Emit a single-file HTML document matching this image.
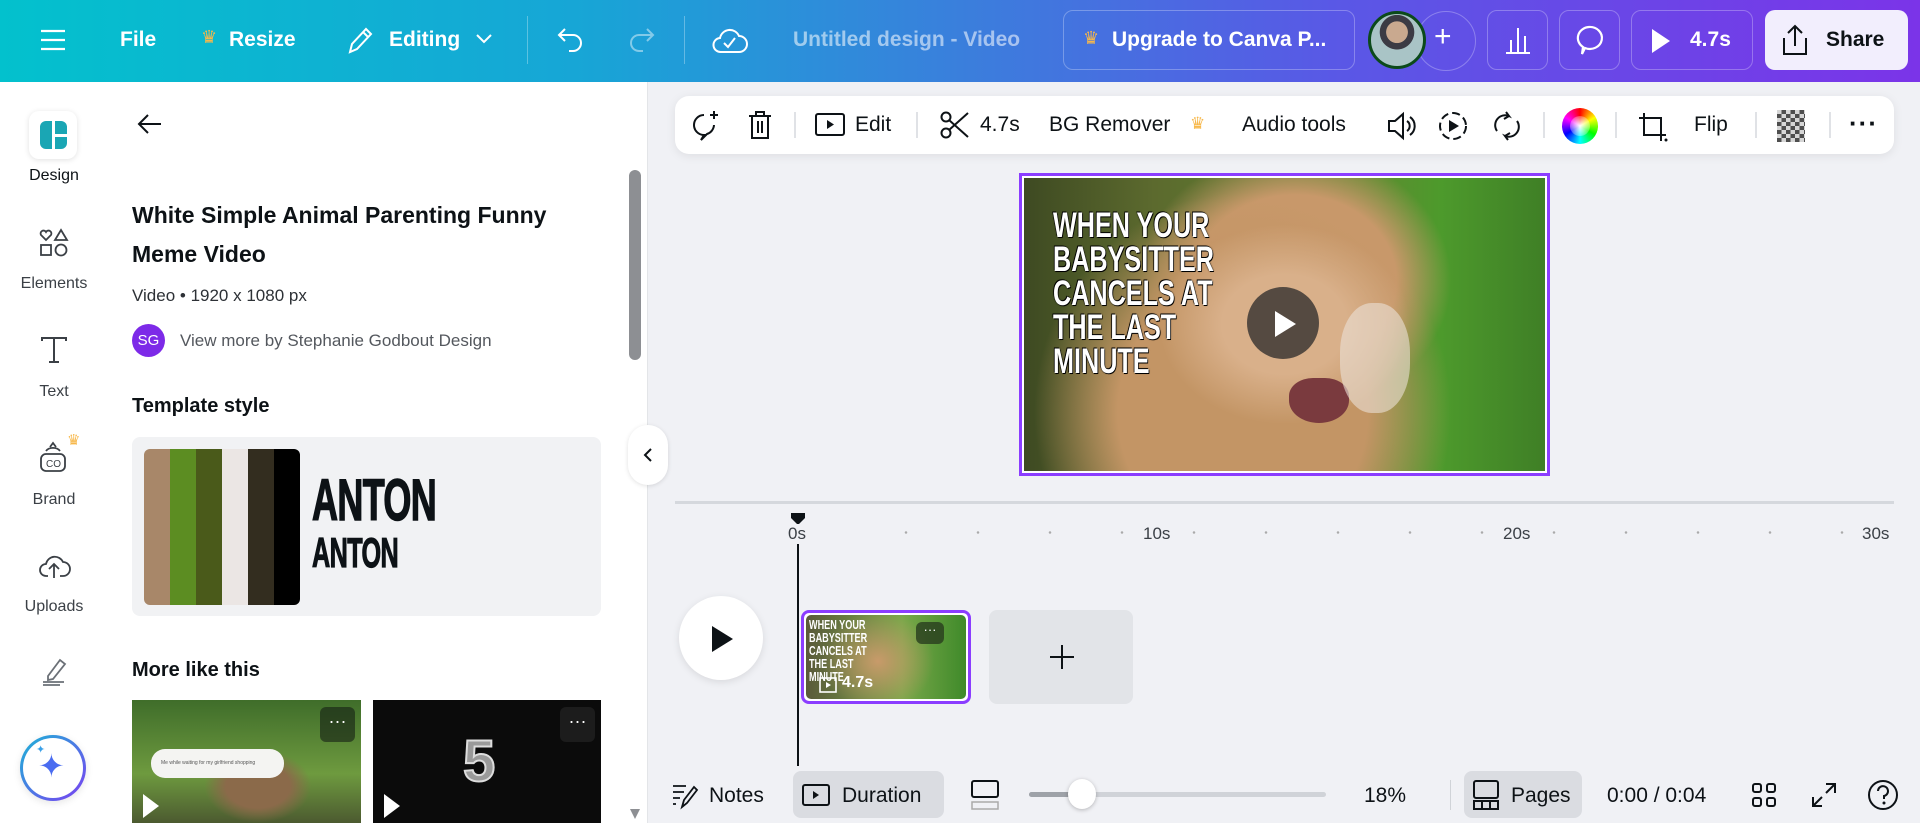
<!DOCTYPE html>
<html><head><meta charset="utf-8"><style>
*{box-sizing:border-box;margin:0;padding:0}
body{width:1920px;height:823px;overflow:hidden;background:#f0f1f5;font-family:"Liberation Sans",sans-serif;color:#0d1216;position:relative}
.a{position:absolute}
.top{left:0;top:0;width:1920px;height:82px;background:linear-gradient(90deg,#03c1cd 0%,#17a6d6 30%,#3a7fdc 50%,#5a57e6 70%,#7b34e8 100%)}
.tw{color:#fff;font-weight:bold;font-size:21px;top:28px}
.tbtn{border:1px solid rgba(255,255,255,.28);border-radius:10px;top:10px;height:60px}
.rail{left:0;top:82px;width:108px;height:741px;background:#fff}
.rl{width:108px;text-align:center;font-size:16px;color:#3b4046}
.panel{left:108px;top:82px;width:540px;height:741px;background:#fff;border-right:1px solid #e3e5e8}
.tb{left:675px;top:96px;width:1219px;height:58px;background:#fff;border-radius:14px;box-shadow:0 2px 10px rgba(0,0,0,.08)}
.tt{font-size:21px;top:16px;color:#0d1216}
.sep{width:2px;height:26px;top:16px;background:#e0e2e6}
svg{position:absolute;overflow:visible}
.cond{font-family:"Liberation Sans Narrow","Liberation Sans",sans-serif;font-weight:bold;transform-origin:left top}
</style></head><body>
<div class="a top"></div>
<svg style="left:41px;top:29px" width="24" height="22"><g stroke="#fff" stroke-width="2.2"><line x1="0" y1="2" x2="24" y2="2"/><line x1="0" y1="11" x2="24" y2="11"/><line x1="0" y1="20" x2="24" y2="20"/></g></svg>
<div class="a tw" style="left:120px">File</div>
<div class="a" style="left:201px;top:27px;color:#f7b84b;font-size:18px">♛</div>
<div class="a tw" style="left:229px">Resize</div>
<svg style="left:346px;top:26px" width="28" height="30"><path d="M4 26 L6 18 L20 3 L25 8 L11 23 Z M17 6 L22 11" fill="none" stroke="#fff" stroke-width="2"/></svg>
<div class="a tw" style="left:389px">Editing</div>
<svg style="left:476px;top:34px" width="16" height="10"><path d="M1 1 L8 8 L15 1" fill="none" stroke="#fff" stroke-width="2"/></svg>
<div class="a" style="left:527px;top:16px;width:1px;height:48px;background:rgba(255,255,255,.3)"></div>
<svg style="left:557px;top:27px" width="28" height="26"><path d="M8 2 L2 8 L8 14 M2 8 H16 a8 8 0 0 1 0 16 H12" fill="none" stroke="#fff" stroke-width="2"/></svg>
<svg style="left:627px;top:27px" width="28" height="26"><path d="M20 2 L26 8 L20 14 M26 8 H12 a8 8 0 0 0 0 16 H16" fill="none" stroke="rgba(255,255,255,.45)" stroke-width="2"/></svg>
<div class="a" style="left:684px;top:16px;width:1px;height:48px;background:rgba(255,255,255,.3)"></div>
<svg style="left:713px;top:26px" width="32" height="28"><path d="M8 26 a7 7 0 0 1 -1 -14 a10 10 0 0 1 19 -2 a8 8 0 0 1 0 16 Z" fill="none" stroke="#fff" stroke-width="2"/><path d="M11 17 L15 21 L22 12" fill="none" stroke="#fff" stroke-width="2"/></svg>
<div class="a tw" style="left:793px;color:rgba(255,255,255,.55)">Untitled design - Video</div>
<div class="a tbtn" style="left:1063px;width:292px"></div>
<div class="a" style="left:1083px;top:28px;color:#f7b84b;font-size:18px">♛</div>
<div class="a tw" style="left:1112px">Upgrade to Canva P...</div>
<div class="a" style="left:1416px;top:11px;width:60px;height:60px;border-radius:50%;border:1px solid rgba(255,255,255,.28)"></div>
<div class="a" style="left:1368px;top:11px;width:58px;height:58px;border-radius:50%;border:3px solid #0b4a1a;background:radial-gradient(circle at 50% 35%,#c9a98f 0 25%,#3b3b44 26% 40%,#a9c4c6 41%)"></div>
<div class="a" style="left:1434px;top:22px;color:#fff;font-size:30px;line-height:30px">+</div>
<div class="a tbtn" style="left:1487px;width:61px"></div>
<svg style="left:1504px;top:26px" width="28" height="28"><g stroke="#fff" stroke-width="2"><line x1="2" y1="27" x2="26" y2="27"/><line x1="7" y1="27" x2="7" y2="14"/><line x1="14" y1="27" x2="14" y2="2"/><line x1="21" y1="27" x2="21" y2="10"/></g></svg>
<div class="a tbtn" style="left:1559px;width:61px"></div>
<svg style="left:1574px;top:25px" width="30" height="32"><path d="M15 2 a12 11 0 1 1 -4 21 L8 29 L9 22 a12 11 0 0 1 6 -20 Z" fill="none" stroke="#fff" stroke-width="2.2"/></svg>
<div class="a tbtn" style="left:1631px;width:122px"></div>
<svg style="left:1650px;top:27px" width="22" height="28"><path d="M2 2 L20 14 L2 26 Z" fill="#fff"/></svg>
<div class="a tw" style="left:1690px">4.7s</div>
<div class="a" style="left:1765px;top:10px;width:143px;height:60px;border-radius:10px;background:#f2eefd"></div>
<svg style="left:1781px;top:24px" width="28" height="32"><path d="M14 22 V2 M7 9 L14 2 L21 9 M3 14 V30 H25 V14" fill="none" stroke="#0d1216" stroke-width="2"/></svg>
<div class="a" style="left:1826px;top:28px;font-size:21px;font-weight:bold;color:#0d1216">Share</div>

<div class="a rail"></div>
<div class="a" style="left:29px;top:111px;width:48px;height:48px;border-radius:10px;background:#fff;box-shadow:0 1px 6px rgba(0,0,0,.12)"></div>
<div class="a" style="left:40px;top:121px;width:27px;height:28px;border-radius:6px;background:#1aa6b4"></div>
<div class="a" style="left:52px;top:121px;width:3px;height:28px;background:#fff"></div>
<div class="a" style="left:55px;top:134px;width:12px;height:3px;background:#fff"></div>
<div class="a rl" style="top:167px;color:#0d1216">Design</div>
<svg style="left:40px;top:229px" width="28" height="28"><g fill="none" stroke="#3b4046" stroke-width="1.8"><path d="M6 11 L1 6 a2.8 2.8 0 0 1 5 -3 a2.8 2.8 0 0 1 5 3 Z"/><path d="M21 1 L27 11 H15 Z"/><rect x="1" y="16" width="10" height="10"/><circle cx="21" cy="21" r="5.5"/></g></svg>
<div class="a rl" style="top:275px">Elements</div>
<svg style="left:41px;top:337px" width="26" height="26"><path d="M1 4 V1 H25 V4 M13 1 V25 M8 25 H18" fill="none" stroke="#3b4046" stroke-width="2"/></svg>
<div class="a rl" style="top:383px">Text</div>
<svg style="left:40px;top:441px" width="28" height="32"><g fill="none" stroke="#3b4046" stroke-width="1.8"><rect x="1" y="13" width="24" height="17" rx="5"/><path d="M6 10 a8 6 0 0 1 14 0 M10 6 L13 2 L16 6"/><text x="6" y="26" font-size="10" fill="#3b4046" stroke="none" font-family="Liberation Sans">CO</text></g></svg>
<div class="a" style="left:67px;top:431px;color:#f7b84b;font-size:15px">♛</div>
<div class="a rl" style="top:491px">Brand</div>
<svg style="left:39px;top:550px" width="30" height="30"><path d="M9 26 H7 a6 6 0 0 1 0 -12 a9 9 0 0 1 17 -2 a7 7 0 0 1 0 14 H21 M15 28 V14 M10 19 L15 14 L20 19" fill="none" stroke="#3b4046" stroke-width="1.8"/></svg>
<div class="a rl" style="top:598px">Uploads</div>
<svg style="left:40px;top:658px" width="28" height="28"><path d="M8 18 L20 2 L25 6 L13 21 L8 22 Z M3 24 H24 M3 27 H20" fill="none" stroke="#6b7077" stroke-width="1.8"/></svg>
<div class="a" style="left:20px;top:735px;width:66px;height:66px;border-radius:50%;background:linear-gradient(#fff,#fff) padding-box,linear-gradient(135deg,#1bb4d6,#7b3ff2) border-box;border:3px solid transparent;box-shadow:0 2px 8px rgba(0,0,0,.1)"></div>
<div class="a" style="left:38px;top:748px;font-size:32px;color:#4a6cf0;line-height:36px">✦</div>
<div class="a" style="left:36px;top:743px;font-size:11px;color:#3aa0e8">✦</div>

<div class="a panel"></div>
<svg style="left:138px;top:114px" width="24" height="20"><path d="M10 1 L1 10 L10 19 M1 10 H23" fill="none" stroke="#0d1216" stroke-width="2"/></svg>
<div class="a" style="left:132px;top:196px;font-size:23px;font-weight:bold;line-height:39px;width:470px;color:#0d1216">White Simple Animal Parenting Funny Meme Video</div>
<div class="a" style="left:132px;top:286px;font-size:17px;color:#2d3136">Video • 1920 x 1080 px</div>
<div class="a" style="left:132px;top:324px;width:33px;height:33px;border-radius:50%;background:#7d2ae8;color:#fff;font-size:15px;text-align:center;line-height:33px">SG</div>
<div class="a" style="left:180px;top:331px;font-size:17px;color:#54585e">View more by Stephanie Godbout Design</div>
<div class="a" style="left:132px;top:395px;font-size:20px;font-weight:bold">Template style</div>
<div class="a" style="left:132px;top:437px;width:469px;height:179px;border-radius:8px;background:#f1f2f4"></div>
<div class="a" style="left:144px;top:449px;width:156px;height:156px;border-radius:6px;overflow:hidden;display:flex">
<div style="flex:1;background:#a88769"></div><div style="flex:1;background:#5c8d22"></div><div style="flex:1;background:#4a5a1a"></div><div style="flex:1;background:#ebe6e4"></div><div style="flex:1;background:#332d1f"></div><div style="flex:1;background:#000"></div></div>
<div class="a cond" style="left:312px;top:472px;font-size:58px;line-height:58px;transform:scaleX(.62);-webkit-text-stroke:1.5px #0d1216;letter-spacing:-1px">ANTON</div>
<div class="a cond" style="left:312px;top:532px;font-size:42px;line-height:42px;transform:scaleX(.6);-webkit-text-stroke:1.2px #0d1216;letter-spacing:-1px">ANTON</div>
<div class="a" style="left:132px;top:659px;font-size:20px;font-weight:bold">More like this</div>
<div class="a" style="left:132px;top:700px;width:229px;height:123px;background:radial-gradient(ellipse at 55% 70%,#8b6a4a 0 18%,transparent 30%),linear-gradient(#3f6d2a,#6e9a3f 60%,#4c5a30)"></div>
<div class="a" style="left:151px;top:749px;width:133px;height:29px;border-radius:14px;background:#f4f4f2;font-size:5px;color:#555;padding:11px 10px">Me while waiting for my girlfriend shopping</div>
<div class="a" style="left:320px;top:707px;width:35px;height:35px;border-radius:6px;background:rgba(20,30,20,.6);color:#fff;text-align:center;font-size:18px;line-height:28px">···</div>
<svg style="left:143px;top:794px" width="18" height="24"><path d="M0 0 L16 12 L0 24Z" fill="#fff"/></svg>
<div class="a" style="left:373px;top:700px;width:228px;height:123px;background:#0b0b0b"></div>
<div class="a" style="left:463px;top:728px;font-size:58px;font-weight:bold;color:#9a9a9a;-webkit-text-stroke:2px #ddd">5</div>
<div class="a" style="left:560px;top:707px;width:35px;height:35px;border-radius:6px;background:#1c1c1c;color:#fff;text-align:center;font-size:18px;line-height:28px">···</div>
<svg style="left:384px;top:794px" width="18" height="24"><path d="M0 0 L16 12 L0 24Z" fill="#fff"/></svg>
<div class="a" style="left:629px;top:170px;width:12px;height:190px;border-radius:6px;background:#8d8f93"></div>
<svg style="left:629px;top:808px" width="12" height="12"><path d="M1 1 L6 11 L11 1Z" fill="#8d8f93"/></svg>

<div class="a" style="left:628px;top:425px;width:40px;height:60px;border-radius:20px;background:#fff;box-shadow:0 1px 5px rgba(0,0,0,.12)"></div>
<svg style="left:643px;top:448px" width="10" height="14"><path d="M8 1 L2 7 L8 13" fill="none" stroke="#0d1216" stroke-width="2"/></svg>

<div class="a tb"></div>
<svg style="left:690px;top:110px" width="32" height="32"><path d="M14 5 a10 10 0 1 0 0 20 L11 30 L17 24 a10 10 0 0 0 7 -9 M24 1 V9 M20 5 H28" fill="none" stroke="#0d1216" stroke-width="2"/></svg>
<svg style="left:748px;top:110px" width="24" height="30"><path d="M1 6 H23 M8 6 V2 H16 V6 M4 6 V28 H20 V6 M10 11 V23 M14 11 V23" fill="none" stroke="#0d1216" stroke-width="2"/></svg>
<div class="a sep" style="left:794px;top:112px"></div>
<svg style="left:815px;top:113px" width="30" height="24"><rect x="1" y="1" width="28" height="21" rx="2" fill="none" stroke="#0d1216" stroke-width="2"/><path d="M12 7 L19 11.5 L12 16Z" fill="#0d1216"/></svg>
<div class="a tt" style="left:855px;top:113px">Edit</div>
<div class="a sep" style="left:916px;top:112px"></div>
<svg style="left:940px;top:111px" width="30" height="28"><g fill="none" stroke="#0d1216" stroke-width="2"><circle cx="6" cy="6" r="4.5"/><circle cx="6" cy="22" r="4.5"/><path d="M9 9 L28 26 M9 19 L28 2"/></g></svg>
<div class="a tt" style="left:980px;top:113px">4.7s</div>
<div class="a tt" style="left:1049px;top:113px">BG Remover</div>
<div class="a" style="left:1190px;top:114px;color:#f7b84b;font-size:17px">♛</div>
<div class="a tt" style="left:1242px;top:113px">Audio tools</div>
<svg style="left:1387px;top:111px" width="28" height="30"><path d="M2 10 H8 L16 3 V27 L8 20 H2 Z M20 10 a6 6 0 0 1 0 10 M23 6 a11 11 0 0 1 0 18" fill="none" stroke="#0d1216" stroke-width="2"/></svg>
<svg style="left:1438px;top:111px" width="30" height="30"><circle cx="15" cy="15" r="13" fill="none" stroke="#0d1216" stroke-width="2" stroke-dasharray="8 4"/><path d="M11 9 L21 15 L11 21Z" fill="#0d1216"/></svg>
<svg style="left:1491px;top:111px" width="32" height="30"><path d="M6 20 a10 10 0 0 1 12 -15 L15 1 M18 5 L13 8 M26 10 a10 10 0 0 1 -12 15 L17 29 M14 25 L19 22" fill="none" stroke="#0d1216" stroke-width="2"/></svg>
<div class="a sep" style="left:1543px;top:112px"></div>
<div class="a" style="left:1562px;top:108px;width:36px;height:36px;border-radius:50%;background:conic-gradient(red,#ff0,#0f0,#0ff,#00f,#f0f,red)"></div>
<div class="a" style="left:1570px;top:116px;width:20px;height:20px;border-radius:50%;background:radial-gradient(#fff,rgba(255,255,255,0))"></div>
<div class="a sep" style="left:1615px;top:112px"></div>
<svg style="left:1638px;top:112px" width="30" height="30"><path d="M6 1 V23 H28 M1 6 H23 V29" fill="none" stroke="#0d1216" stroke-width="2"/><circle cx="28" cy="28" r="1.5" fill="#0d1216"/></svg>
<div class="a tt" style="left:1694px;top:113px">Flip</div>
<div class="a sep" style="left:1755px;top:112px"></div>
<div class="a" style="left:1777px;top:110px;width:28px;height:32px;background:repeating-conic-gradient(#222 0 25%,#ccc 0 50%) 0 0/9px 8px;opacity:.8"></div>
<div class="a sep" style="left:1829px;top:112px"></div>
<div class="a" style="left:1849px;top:108px;font-size:26px;font-weight:bold;letter-spacing:1px">···</div>

<div class="a" style="left:1019px;top:173px;width:531px;height:303px;border:3px solid #8b3dff;background:#fff;padding:2px">
<div style="width:100%;height:100%;background:
radial-gradient(ellipse 24% 34% at 50% 50%,#d9b08a 0 50%,rgba(210,170,130,0) 100%),
radial-gradient(ellipse 40% 75% at 42% 80%,#c39565 0 60%,rgba(190,140,90,0) 100%),
radial-gradient(ellipse 30% 45% at 52% 35%,#c8986a 0 65%,rgba(200,150,100,0) 100%),
linear-gradient(90deg,#3e4a22 0%,#5c6a2e 25%,#5f8a30 65%,#4d9a2c 80%,#3f7f26 100%);position:relative;overflow:hidden">
<div style="position:absolute;left:265px;top:200px;width:60px;height:45px;border-radius:40% 40% 50% 50%;background:#7a3a3e"></div>
<div style="position:absolute;left:316px;top:125px;width:70px;height:110px;border-radius:45%;background:rgba(235,225,215,.6)"></div>
<div style="position:absolute;left:223px;top:109px;width:72px;height:72px;border-radius:50%;background:rgba(40,40,40,.75)"></div>
<svg style="left:251px;top:133px" width="22" height="26"><path d="M0 0 L21 13 L0 26Z" fill="#fff"/></svg>
<div class="cond" style="position:absolute;left:29px;top:31px;font-size:35px;line-height:34px;color:#fff;transform:scaleX(.72);text-shadow:0 0 2px #000,1px 1px 0 #000,-1px -1px 0 #000;white-space:nowrap">WHEN YOUR<br>BABYSITTER<br>CANCELS AT<br>THE LAST<br>MINUTE</div>
</div></div>

<div class="a" style="left:675px;top:501px;width:1219px;height:3px;background:#d5d8dd"></div>
<svg style="left:790px;top:512px" width="16" height="14"><path d="M1 1 H15 V6 L8 13 L1 6Z" fill="#0d1216"/></svg>
<div class="a" style="left:797px;top:526px;width:2px;height:240px;background:#0d1216"></div>
<div class="a" style="left:788px;top:524px;font-size:17px;color:#3b4046;background:#f0f1f5">0s</div>
<div class="a" style="left:1143px;top:524px;font-size:17px;color:#3b4046">10s</div>
<div class="a" style="left:1503px;top:524px;font-size:17px;color:#3b4046">20s</div>
<div class="a" style="left:1862px;top:524px;font-size:17px;color:#3b4046">30s</div>
<div class="a" style="left:870px;top:531px;width:1000px;height:3px;background:radial-gradient(circle,#aaa 1px,transparent 1.5px) 0 0/72px 3px"></div>
<div class="a" style="left:679px;top:596px;width:84px;height:84px;border-radius:50%;background:#fff;box-shadow:0 2px 8px rgba(0,0,0,.1)"></div>
<svg style="left:712px;top:626px" width="22" height="26"><path d="M0 0 L21 13 L0 26Z" fill="#0d1216"/></svg>
<div class="a" style="left:801px;top:610px;width:170px;height:94px;border:3px solid #8b3dff;border-radius:8px;background:#fff;padding:2px">
<div style="width:100%;height:100%;border-radius:5px;background:radial-gradient(ellipse 35% 60% at 45% 55%,#c89a6a,rgba(0,0,0,0) 100%),linear-gradient(90deg,#5a5a3a,#7aa84a 60%,#3f8a2a);position:relative;overflow:hidden">
<div class="cond" style="position:absolute;left:3px;top:3px;font-size:13px;line-height:13px;color:#fff;transform:scaleX(.7);white-space:nowrap">WHEN YOUR<br>BABYSITTER<br>CANCELS AT<br>THE LAST<br>MINUTE</div>
<div style="position:absolute;left:110px;top:7px;width:28px;height:22px;border-radius:6px;background:rgba(40,60,30,.8);color:#fff;font-size:13px;text-align:center;line-height:16px">···</div>
<svg style="left:13px;top:62px" width="18" height="16"><rect x="1" y="1" width="16" height="14" fill="none" stroke="#fff" stroke-width="1.6"/><path d="M7 5 L12 8 L7 11Z" fill="#fff"/></svg>
<div style="position:absolute;left:36px;top:59px;color:#fff;font-weight:bold;font-size:16px">4.7s</div>
</div></div>
<div class="a" style="left:989px;top:610px;width:144px;height:94px;border-radius:8px;background:#e2e4e8"></div>
<svg style="left:1050px;top:645px" width="24" height="24"><path d="M12 0 V24 M0 12 H24" stroke="#0d1216" stroke-width="2"/></svg>

<svg style="left:672px;top:784px" width="26" height="24"><path d="M1 2 H14 M1 8 H12 M1 14 H8 M1 20 H4 M10 23 L12 16 L22 3 L25 6 L15 19 Z" fill="none" stroke="#0d1216" stroke-width="1.8"/></svg>
<div class="a" style="left:709px;top:784px;font-size:21px">Notes</div>
<div class="a" style="left:793px;top:771px;width:151px;height:47px;border-radius:8px;background:#dadce1"></div>
<svg style="left:802px;top:784px" width="28" height="22"><rect x="1" y="1" width="26" height="20" rx="2" fill="none" stroke="#0d1216" stroke-width="2"/><path d="M11 7 L17 11 L11 15Z" fill="#0d1216"/></svg>
<div class="a" style="left:842px;top:784px;font-size:21px">Duration</div>
<svg style="left:971px;top:780px" width="28" height="30"><rect x="1" y="1" width="26" height="16" rx="2" fill="none" stroke="#0d1216" stroke-width="2"/><rect x="1" y="22" width="26" height="7" fill="none" stroke="#aaa" stroke-width="1.5"/></svg>
<div class="a" style="left:1029px;top:792px;width:297px;height:5px;border-radius:3px;background:#d0d3d8"></div>
<div class="a" style="left:1029px;top:792px;width:50px;height:5px;border-radius:3px;background:#9ea2a8"></div>
<div class="a" style="left:1068px;top:779px;width:28px;height:30px;border-radius:50%;background:#fff;box-shadow:0 1px 4px rgba(0,0,0,.25)"></div>
<div class="a" style="left:1364px;top:784px;font-size:21px">18%</div>
<div class="a" style="left:1450px;top:780px;width:1px;height:30px;background:#d0d3d8"></div>
<div class="a" style="left:1464px;top:771px;width:118px;height:47px;border-radius:8px;background:#dadce1"></div>
<svg style="left:1473px;top:780px" width="26" height="30"><rect x="1" y="1" width="24" height="17" rx="2" fill="none" stroke="#0d1216" stroke-width="2"/><rect x="1" y="21" width="24" height="8" fill="none" stroke="#0d1216" stroke-width="2"/><path d="M9 21 V29 M17 21 V29" stroke="#0d1216" stroke-width="2"/></svg>
<div class="a" style="left:1511px;top:784px;font-size:21px">Pages</div>
<div class="a" style="left:1607px;top:784px;font-size:21px">0:00 / 0:04</div>
<svg style="left:1752px;top:783px" width="24" height="24"><g fill="none" stroke="#0d1216" stroke-width="2"><rect x="1" y="1" width="8" height="8" rx="2"/><rect x="15" y="1" width="8" height="8" rx="2"/><rect x="1" y="15" width="8" height="8" rx="2"/><rect x="15" y="15" width="8" height="8" rx="2"/></g></svg>
<svg style="left:1812px;top:783px" width="24" height="24"><path d="M14 1 H23 V10 M23 1 L14 10 M1 14 V23 H10 M1 23 L10 14" fill="none" stroke="#0d1216" stroke-width="2"/></svg>
<svg style="left:1867px;top:779px" width="32" height="32"><circle cx="16" cy="16" r="14" fill="none" stroke="#0d1216" stroke-width="2"/><path d="M11 12 a5 5 0 1 1 6 5 V20" fill="none" stroke="#0d1216" stroke-width="2"/><circle cx="17" cy="24" r="1.5" fill="#0d1216"/></svg>
</body></html>
